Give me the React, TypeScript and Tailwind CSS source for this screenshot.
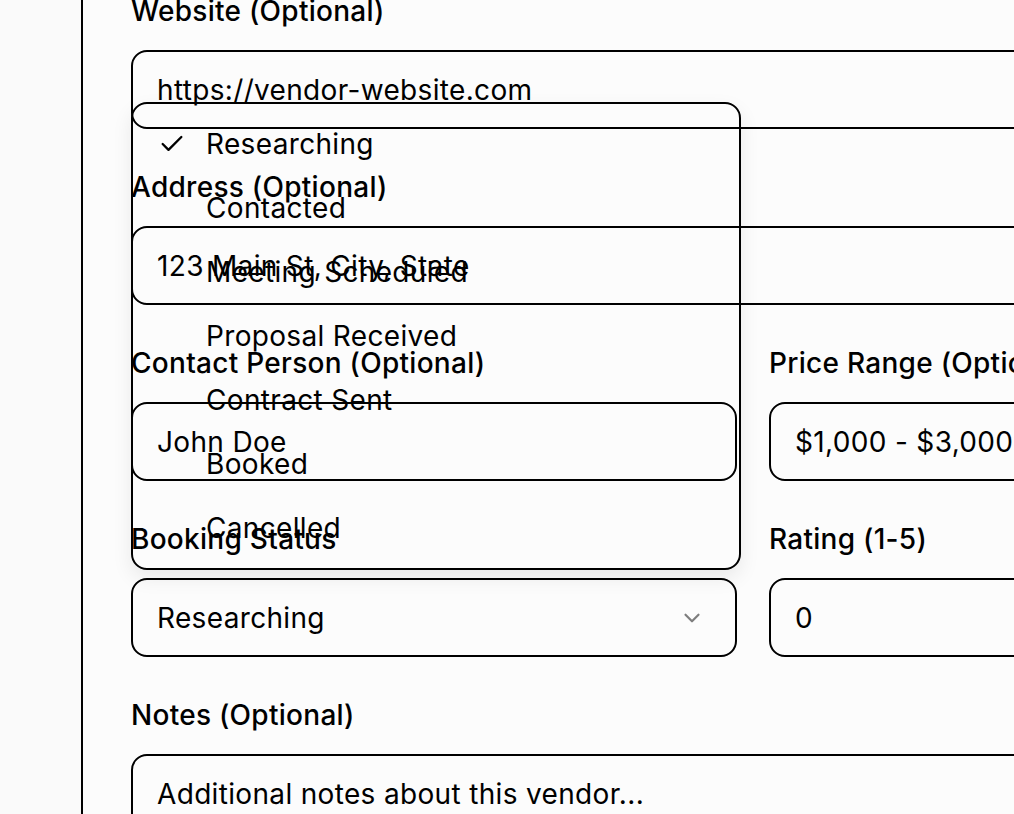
import React from "react";
import { Check, ChevronDown } from "lucide-react";

const font = { fontFamily: "Inter, 'Noto Sans', sans-serif" };

function Label({ children }: { children: React.ReactNode }) {
  return (
    <div className="h-[32px] leading-[32px] text-[28px] tracking-[0.01em] font-medium text-black whitespace-nowrap">
      {children}
    </div>
  );
}

function Field({ label, value, className = "", chevron = false }: { label: string; value: string; className?: string; chevron?: boolean }) {
  return (
    <div className={"flex flex-col gap-[23px] " + className}>
      <Label>{label}</Label>
      <div className="h-[79px] rounded-[16px] border-2 border-black flex items-center justify-between pl-[24px] pr-[30px] text-[28px] tracking-[0.012em] text-black whitespace-nowrap">
        <span>{value}</span>
        {chevron && <ChevronDown className="w-[26px] h-[26px] text-black/50" strokeWidth={2} />}
      </div>
    </div>
  );
}

const items = [
  "Researching",
  "Contacted",
  "Meeting Scheduled",
  "Proposal Received",
  "Contract Sent",
  "Booked",
  "Cancelled",
];

export default function App() {
  return (
    <div style={font} className="w-[1014px] h-[814px] overflow-hidden flex bg-[#fcfcfc]">
      <div className="w-[81px] shrink-0 bg-[#fafafa]" />
      <div className="w-[2px] shrink-0 bg-black" />
      <div className="relative flex-1 overflow-hidden pl-[48px]">
        <div className="w-[1244px] -mt-[5px] flex flex-col gap-[42px]">
          <Field label="Website (Optional)" value="https://vendor-website.com" />
          <Field label="Address (Optional)" value="123 Main St, City, State" />
          <div className="flex gap-[32px]">
            <Field className="w-[606px]" label="Contact Person (Optional)" value="John Doe" />
            <Field className="w-[606px]" label="Price Range (Optional)" value="$1,000 - $3,000" />
          </div>
          <div className="flex gap-[32px]">
            <Field className="w-[606px]" label="Booking Status" value="Researching" chevron />
            <Field className="w-[606px]" label="Rating (1-5)" value="0" />
          </div>
          <Field label="Notes (Optional)" value="Additional notes about this vendor..." />
        </div>
        <div className="absolute left-[48px] top-[102px] w-[610px] rounded-[16px] border-2 border-black py-[8px] shadow-[0_8px_20px_rgba(0,0,0,0.08)]">
          {items.map((it, i) => (
            <div key={it} className="relative h-[64px] flex items-center pl-[73px] text-[28px] tracking-[0.012em] text-black whitespace-nowrap">
              {i === 0 && (
                <span className="absolute left-[25px] top-1/2 -translate-y-1/2 flex">
                  <Check className="w-[28px] h-[28px]" strokeWidth={2} />
                </span>
              )}
              {it}
            </div>
          ))}
        </div>
      </div>
    </div>
  );
}
